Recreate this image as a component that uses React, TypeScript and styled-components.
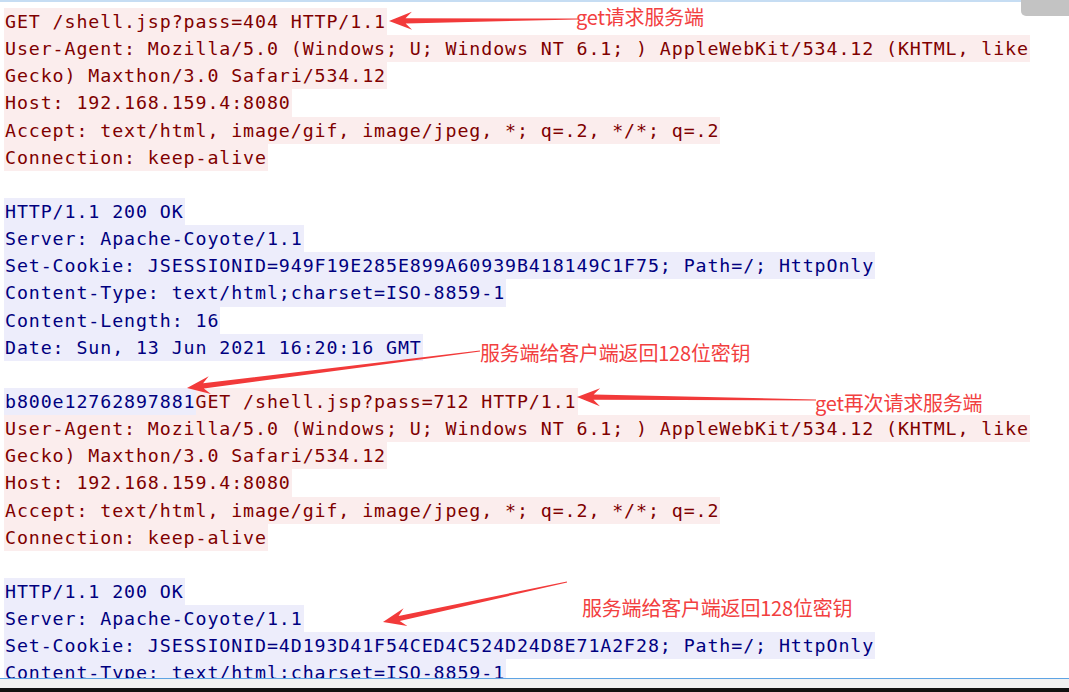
import React from "react";
import styled, { createGlobalStyle } from "styled-components";

const GlobalStyle = createGlobalStyle`
  html, body { margin: 0; padding: 0; background: #ffffff; overflow: hidden; }
  #root { width: 1069px; height: 692px; }
`;

type Side = "c" | "s";
type Seg = { side: Side; text: string };
type LineData = Seg[];

const c = (text: string): Seg => ({ side: "c", text });
const s = (text: string): Seg => ({ side: "s", text });

const clientReq = (pass: string): LineData[] => [
  [c(`GET /shell.jsp?pass=${pass} HTTP/1.1`)],
  [c("User-Agent: Mozilla/5.0 (Windows; U; Windows NT 6.1; ) AppleWebKit/534.12 (KHTML, like")],
  [c("Gecko) Maxthon/3.0 Safari/534.12")],
  [c("Host: 192.168.159.4:8080")],
  [c("Accept: text/html, image/gif, image/jpeg, *; q=.2, */*; q=.2")],
  [c("Connection: keep-alive")],
];

const lines: LineData[] = [
  ...clientReq("404"),
  [],
  [s("HTTP/1.1 200 OK")],
  [s("Server: Apache-Coyote/1.1")],
  [s("Set-Cookie: JSESSIONID=949F19E285E899A60939B418149C1F75; Path=/; HttpOnly")],
  [s("Content-Type: text/html;charset=ISO-8859-1")],
  [s("Content-Length: 16")],
  [s("Date: Sun, 13 Jun 2021 16:20:16 GMT")],
  [],
  [s("b800e12762897881"), c("GET /shell.jsp?pass=712 HTTP/1.1")],
  ...clientReq("712").slice(1),
  [],
  [s("HTTP/1.1 200 OK")],
  [s("Server: Apache-Coyote/1.1")],
  [s("Set-Cookie: JSESSIONID=4D193D41F54CED4C524D24D8E71A2F28; Path=/; HttpOnly")],
  [s("Content-Type: text/html;charset=ISO-8859-1")],
];

const Page = styled.div`
  position: relative;
  width: 1069px;
  height: 692px;
  display: flex;
  flex-direction: column;
  background: #ffffff;
  overflow: hidden;
`;

const TopRule = styled.div`
  height: 2px;
  flex: none;
  background: #c6ddf3;
`;

const Viewer = styled.div`
  flex: 1;
  min-height: 0;
  overflow: hidden;
  padding: 6px 0 0 4px;
  font-family: "DejaVu Sans Mono", "Liberation Mono", monospace;
  font-size: 18.3px;
  letter-spacing: 0.9px;
`;

const Line = styled.div`
  display: flex;
  height: 27.15px;
  white-space: pre;
`;

const Segment = styled.span<{ $side: Side }>`
  display: block;
  line-height: 27.15px;
  height: 27.15px;
  color: ${(p) => (p.$side === "c" ? "#7f0000" : "#00007f")};
  background: ${(p) => (p.$side === "c" ? "#fbeded" : "#ededfb")};
  &:first-child { padding-left: 1px; }
  &:last-child { padding-right: 1px; }
`;

const BottomRule = styled.div`
  height: 1px;
  flex: none;
  background: #5ea4e4;
`;

const StatusBar = styled.div`
  height: 9px;
  flex: none;
  background: #f0f0f0;
`;

const Frame = styled.div`
  height: 4px;
  flex: none;
  background: #111111;
`;

const CornerButton = styled.div`
  position: absolute;
  top: 0;
  right: 0;
  width: 48px;
  height: 16px;
  background: #c3c3c3;
  border-bottom-left-radius: 5px;
`;

const Overlay = styled.svg`
  position: absolute;
  inset: 0;
  pointer-events: none;
`;

const Label = styled.div<{ $x: number; $y: number }>`
  position: absolute;
  left: ${(p) => p.$x}px;
  top: ${(p) => p.$y}px;
  font-family: "Noto Sans CJK SC", "Noto Sans", sans-serif;
  font-size: 20px;
  line-height: 20px;
  color: #f2403f;
  white-space: nowrap;
  letter-spacing: -0.2px;
`;

type Pt = [number, number];

function arrowPoints(tail: Pt, tip: Pt): string {
  const dx = tip[0] - tail[0];
  const dy = tip[1] - tail[1];
  const len = Math.hypot(dx, dy);
  const ux = dx / len;
  const uy = dy / len;
  const nx = -uy;
  const ny = ux;
  const L = 23;
  const H = 9;
  const at = (along: number, side: number): string => {
    const x = tip[0] - ux * along + nx * side;
    const y = tip[1] - uy * along + ny * side;
    return `${x.toFixed(1)},${y.toFixed(1)}`;
  };
  const t1 = `${(tail[0] + nx * 0.5).toFixed(1)},${(tail[1] + ny * 0.5).toFixed(1)}`;
  const t2 = `${(tail[0] - nx * 0.5).toFixed(1)},${(tail[1] - ny * 0.5).toFixed(1)}`;
  return [t1, at(L * 0.72, 2.6), at(L, H), at(0, 0), at(L, -H), at(L * 0.72, -2.6), t2].join(" ");
}

const arrows: { tail: Pt; tip: Pt }[] = [
  { tail: [578, 19], tip: [389, 21] },
  { tail: [480, 351], tip: [187, 388] },
  { tail: [816, 400], tip: [577, 397] },
  { tail: [567, 582], tip: [383, 622] },
];

const labels = [
  { x: 576, y: 7, text: "get请求服务端" },
  { x: 480, y: 343, text: "服务端给客户端返回128位密钥" },
  { x: 815, y: 393, text: "get再次请求服务端" },
  { x: 582, y: 598, text: "服务端给客户端返回128位密钥" },
];

export default function App() {
  return (
    <>
      <GlobalStyle />
      <Page>
        <TopRule />
        <Viewer>
          {lines.map((line, i) => (
            <Line key={i}>
              {line.map((seg, j) => (
                <Segment key={j} $side={seg.side}>
                  {seg.text}
                </Segment>
              ))}
            </Line>
          ))}
        </Viewer>
        <BottomRule />
        <StatusBar />
        <Frame />
        <CornerButton />
        <Overlay width={1069} height={692} viewBox="0 0 1069 692">
          {arrows.map((a, i) => (
            <polygon key={i} points={arrowPoints(a.tail, a.tip)} fill="#f23a3a" />
          ))}
        </Overlay>
        {labels.map((l, i) => (
          <Label key={i} $x={l.x} $y={l.y}>
            {l.text}
          </Label>
        ))}
      </Page>
    </>
  );
}
